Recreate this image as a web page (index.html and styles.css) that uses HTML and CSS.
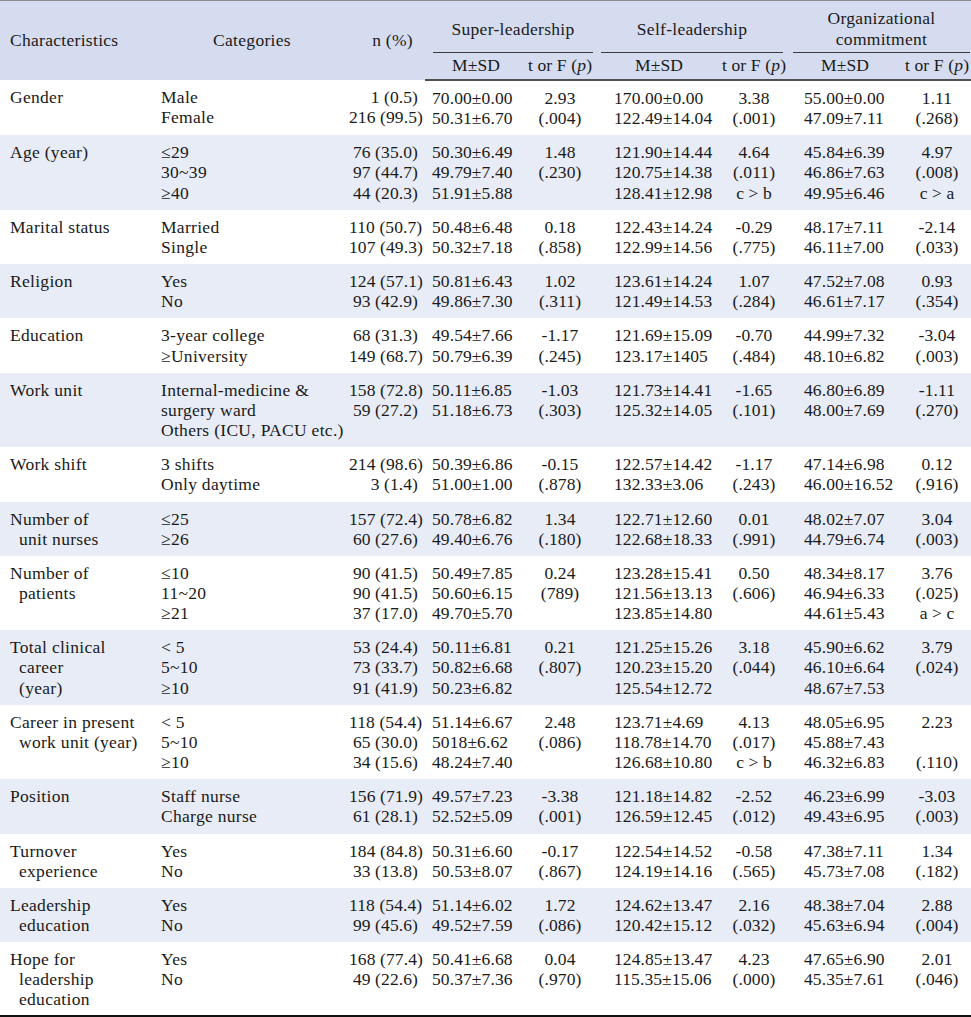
FILE: index.html
```html
<!DOCTYPE html>
<html lang="en">
<head>
<meta charset="utf-8">
<title>Characteristics table</title>
<link rel="stylesheet" href="styles.css">
</head>
<body>
<table class="stats">
  <colgroup>
    <col class="c1"><col class="c2"><col class="c3"><col class="c4"><col class="c5"><col class="c6"><col class="c7"><col class="c8"><col class="c9">
  </colgroup>
  <thead>
    <tr class="top">
      <th rowspan="2" class="h-char">Characteristics</th>
      <th rowspan="2" class="h-cat">Categories</th>
      <th rowspan="2" class="h-n">n (%)</th>
      <th colspan="2" class="g g-sl"><div class="grp">Super-leadership</div></th>
      <th colspan="2" class="g g-self"><div class="grp">Self-leadership</div></th>
      <th colspan="2" class="g g-oc"><div class="grp">Organizational<br>commitment</div></th>
    </tr>
    <tr class="sub">
      <th class="h-m">M±SD</th>
      <th class="h-t">t or F (<i>p</i>)</th>
      <th class="h-m h-m2">M±SD</th>
      <th class="h-t">t or F (<i>p</i>)</th>
      <th class="h-m h-m3">M±SD</th>
      <th class="h-t">t or F (<i>p</i>)</th>
    </tr>
  </thead>
  <tbody>
    <tr>
      <td class="ch">Gender</td>
      <td class="cat">Male<br>Female</td>
      <td class="n">1 (0.5)<br>216 (99.5)</td>
      <td class="m">70.00±0.00<br>50.31±6.70</td>
      <td class="t">2.93<br>(.004)</td>
      <td class="m m2">170.00±0.00<br>122.49±14.04</td>
      <td class="t">3.38<br>(.001)</td>
      <td class="m m3">55.00±0.00<br>47.09±7.11</td>
      <td class="t">1.11<br>(.268)</td>
    </tr>
    <tr>
      <td class="ch">Age (year)</td>
      <td class="cat">≤29<br>30~39<br>≥40</td>
      <td class="n">76 (35.0)<br>97 (44.7)<br>44 (20.3)</td>
      <td class="m">50.30±6.49<br>49.79±7.40<br>51.91±5.88</td>
      <td class="t">1.48<br>(.230)</td>
      <td class="m m2">121.90±14.44<br>120.75±14.38<br>128.41±12.98</td>
      <td class="t">4.64<br>(.011)<br>c &gt; b</td>
      <td class="m m3">45.84±6.39<br>46.86±7.63<br>49.95±6.46</td>
      <td class="t">4.97<br>(.008)<br>c &gt; a</td>
    </tr>
    <tr>
      <td class="ch">Marital status</td>
      <td class="cat">Married<br>Single</td>
      <td class="n">110 (50.7)<br>107 (49.3)</td>
      <td class="m">50.48±6.48<br>50.32±7.18</td>
      <td class="t">0.18<br>(.858)</td>
      <td class="m m2">122.43±14.24<br>122.99±14.56</td>
      <td class="t">-0.29<br>(.775)</td>
      <td class="m m3">48.17±7.11<br>46.11±7.00</td>
      <td class="t">-2.14<br>(.033)</td>
    </tr>
    <tr>
      <td class="ch">Religion</td>
      <td class="cat">Yes<br>No</td>
      <td class="n">124 (57.1)<br>93 (42.9)</td>
      <td class="m">50.81±6.43<br>49.86±7.30</td>
      <td class="t">1.02<br>(.311)</td>
      <td class="m m2">123.61±14.24<br>121.49±14.53</td>
      <td class="t">1.07<br>(.284)</td>
      <td class="m m3">47.52±7.08<br>46.61±7.17</td>
      <td class="t">0.93<br>(.354)</td>
    </tr>
    <tr>
      <td class="ch">Education</td>
      <td class="cat">3-year college<br>≥University</td>
      <td class="n">68 (31.3)<br>149 (68.7)</td>
      <td class="m">49.54±7.66<br>50.79±6.39</td>
      <td class="t">-1.17<br>(.245)</td>
      <td class="m m2">121.69±15.09<br>123.17±1405</td>
      <td class="t">-0.70<br>(.484)</td>
      <td class="m m3">44.99±7.32<br>48.10±6.82</td>
      <td class="t">-3.04<br>(.003)</td>
    </tr>
    <tr>
      <td class="ch">Work unit</td>
      <td class="cat">Internal-medicine &amp;<br>surgery ward<br>Others (ICU, PACU etc.)</td>
      <td class="n">158 (72.8)<br>59 (27.2)</td>
      <td class="m">50.11±6.85<br>51.18±6.73</td>
      <td class="t">-1.03<br>(.303)</td>
      <td class="m m2">121.73±14.41<br>125.32±14.05</td>
      <td class="t">-1.65<br>(.101)</td>
      <td class="m m3">46.80±6.89<br>48.00±7.69</td>
      <td class="t">-1.11<br>(.270)</td>
    </tr>
    <tr>
      <td class="ch">Work shift</td>
      <td class="cat">3 shifts<br>Only daytime</td>
      <td class="n">214 (98.6)<br>3 (1.4)</td>
      <td class="m">50.39±6.86<br>51.00±1.00</td>
      <td class="t">-0.15<br>(.878)</td>
      <td class="m m2">122.57±14.42<br>132.33±3.06</td>
      <td class="t">-1.17<br>(.243)</td>
      <td class="m m3">47.14±6.98<br>46.00±16.52</td>
      <td class="t">0.12<br>(.916)</td>
    </tr>
    <tr>
      <td class="ch">Number of<br>unit nurses</td>
      <td class="cat">≤25<br>≥26</td>
      <td class="n">157 (72.4)<br>60 (27.6)</td>
      <td class="m">50.78±6.82<br>49.40±6.76</td>
      <td class="t">1.34<br>(.180)</td>
      <td class="m m2">122.71±12.60<br>122.68±18.33</td>
      <td class="t">0.01<br>(.991)</td>
      <td class="m m3">48.02±7.07<br>44.79±6.74</td>
      <td class="t">3.04<br>(.003)</td>
    </tr>
    <tr>
      <td class="ch">Number of<br>patients</td>
      <td class="cat">≤10<br>11~20<br>≥21</td>
      <td class="n">90 (41.5)<br>90 (41.5)<br>37 (17.0)</td>
      <td class="m">50.49±7.85<br>50.60±6.15<br>49.70±5.70</td>
      <td class="t">0.24<br>(789)</td>
      <td class="m m2">123.28±15.41<br>121.56±13.13<br>123.85±14.80</td>
      <td class="t">0.50<br>(.606)</td>
      <td class="m m3">48.34±8.17<br>46.94±6.33<br>44.61±5.43</td>
      <td class="t">3.76<br>(.025)<br>a &gt; c</td>
    </tr>
    <tr>
      <td class="ch">Total clinical<br>career<br>(year)</td>
      <td class="cat">&lt; 5<br>5~10<br>≥10</td>
      <td class="n">53 (24.4)<br>73 (33.7)<br>91 (41.9)</td>
      <td class="m">50.11±6.81<br>50.82±6.68<br>50.23±6.82</td>
      <td class="t">0.21<br>(.807)</td>
      <td class="m m2">121.25±15.26<br>120.23±15.20<br>125.54±12.72</td>
      <td class="t">3.18<br>(.044)</td>
      <td class="m m3">45.90±6.62<br>46.10±6.64<br>48.67±7.53</td>
      <td class="t">3.79<br>(.024)</td>
    </tr>
    <tr>
      <td class="ch">Career in present<br>work unit (year)</td>
      <td class="cat">&lt; 5<br>5~10<br>≥10</td>
      <td class="n">118 (54.4)<br>65 (30.0)<br>34 (15.6)</td>
      <td class="m">51.14±6.67<br>5018±6.62<br>48.24±7.40</td>
      <td class="t">2.48<br>(.086)</td>
      <td class="m m2">123.71±4.69<br>118.78±14.70<br>126.68±10.80</td>
      <td class="t">4.13<br>(.017)<br>c &gt; b</td>
      <td class="m m3">48.05±6.95<br>45.88±7.43<br>46.32±6.83</td>
      <td class="t">2.23<br>&nbsp;<br>(.110)</td>
    </tr>
    <tr>
      <td class="ch">Position</td>
      <td class="cat">Staff nurse<br>Charge nurse</td>
      <td class="n">156 (71.9)<br>61 (28.1)</td>
      <td class="m">49.57±7.23<br>52.52±5.09</td>
      <td class="t">-3.38<br>(.001)</td>
      <td class="m m2">121.18±14.82<br>126.59±12.45</td>
      <td class="t">-2.52<br>(.012)</td>
      <td class="m m3">46.23±6.99<br>49.43±6.95</td>
      <td class="t">-3.03<br>(.003)</td>
    </tr>
    <tr>
      <td class="ch">Turnover<br>experience</td>
      <td class="cat">Yes<br>No</td>
      <td class="n">184 (84.8)<br>33 (13.8)</td>
      <td class="m">50.31±6.60<br>50.53±8.07</td>
      <td class="t">-0.17<br>(.867)</td>
      <td class="m m2">122.54±14.52<br>124.19±14.16</td>
      <td class="t">-0.58<br>(.565)</td>
      <td class="m m3">47.38±7.11<br>45.73±7.08</td>
      <td class="t">1.34<br>(.182)</td>
    </tr>
    <tr>
      <td class="ch">Leadership<br>education</td>
      <td class="cat">Yes<br>No</td>
      <td class="n">118 (54.4)<br>99 (45.6)</td>
      <td class="m">51.14±6.02<br>49.52±7.59</td>
      <td class="t">1.72<br>(.086)</td>
      <td class="m m2">124.62±13.47<br>120.42±15.12</td>
      <td class="t">2.16<br>(.032)</td>
      <td class="m m3">48.38±7.04<br>45.63±6.94</td>
      <td class="t">2.88<br>(.004)</td>
    </tr>
    <tr class="last">
      <td class="ch">Hope for<br>leadership<br>education</td>
      <td class="cat">Yes<br>No</td>
      <td class="n">168 (77.4)<br>49 (22.6)</td>
      <td class="m">50.41±6.68<br>50.37±7.36</td>
      <td class="t">0.04<br>(.970)</td>
      <td class="m m2">124.85±13.47<br>115.35±15.06</td>
      <td class="t">4.23<br>(.000)</td>
      <td class="m m3">47.65±6.90<br>45.35±7.61</td>
      <td class="t">2.01<br>(.046)</td>
    </tr>
  </tbody>
</table>
</body>
</html>
```

FILE: styles.css
```css
html, body {
  margin: 0;
  padding: 0;
  background: #ffffff;
}

body {
  font-family: "Liberation Serif", "Times New Roman", serif;
  font-size: 17.5px;
  color: #1a1a1a;
  letter-spacing: 0.3px;
}

.stats {
  width: 971px;
  border-collapse: collapse;
  table-layout: fixed;
}

.c1 { width: 155px; }
.c2 { width: 194px; }
.c3 { width: 76px; }
.c4 { width: 102px; }
.c5 { width: 66px; }
.c6 { width: 128px; }
.c7 { width: 66px; }
.c8 { width: 116px; }
.c9 { width: 68px; }

thead {
  background: #d6dcf0;
}

th {
  font-weight: normal;
  padding: 0;
  line-height: 21px;
}

.top th {
  border-top: 1px solid #8c8c8c;
}

.h-char {
  text-align: left;
  padding-left: 10px;
}

.h-cat {
  text-align: center;
}

.h-n {
  text-align: right;
  padding-right: 12px;
}

.g {
  padding-top: 5px;
  vertical-align: bottom;
}

.grp {
  height: 46px;
  display: flex;
  align-items: center;
  justify-content: center;
  text-align: center;
  border-bottom: 1px solid #3a3a3a;
}

.g-sl .grp { margin-left: 8px; margin-right: 0; }
.g-self .grp { margin-left: 8px; margin-right: 4px; }
.g-oc .grp { margin-left: 6px; margin-right: 1px; }

.sub th {
  padding-top: 2px;
  padding-bottom: 4px;
  line-height: 20px;
  border-bottom: 2px solid #505050;
  letter-spacing: 0.15px;
  text-align: center;
}

.sub .h-m2 { padding-left: 4px; }

td {
  vertical-align: top;
  padding: 7px 0;
  line-height: 20.15px;
  white-space: nowrap;
}

tbody tr:nth-child(even) {
  background: #e8ecf7;
}

tbody tr.last td {
  border-bottom: 2px solid #111111;
  padding-bottom: 5px;
}

.ch {
  padding-left: 19px;
  text-indent: -9px;
  white-space: normal;
}

.cat {
  padding-left: 6px;
}

.n {
  text-align: right;
  padding-right: 7px;
  letter-spacing: 0.1px;
}

.m {
  padding-left: 7px;
  letter-spacing: 0.1px;
}

.m2 { padding-left: 21px; }
.m3 { padding-left: 17px; }

.t {
  text-align: center;
  letter-spacing: 0.1px;
}
```
